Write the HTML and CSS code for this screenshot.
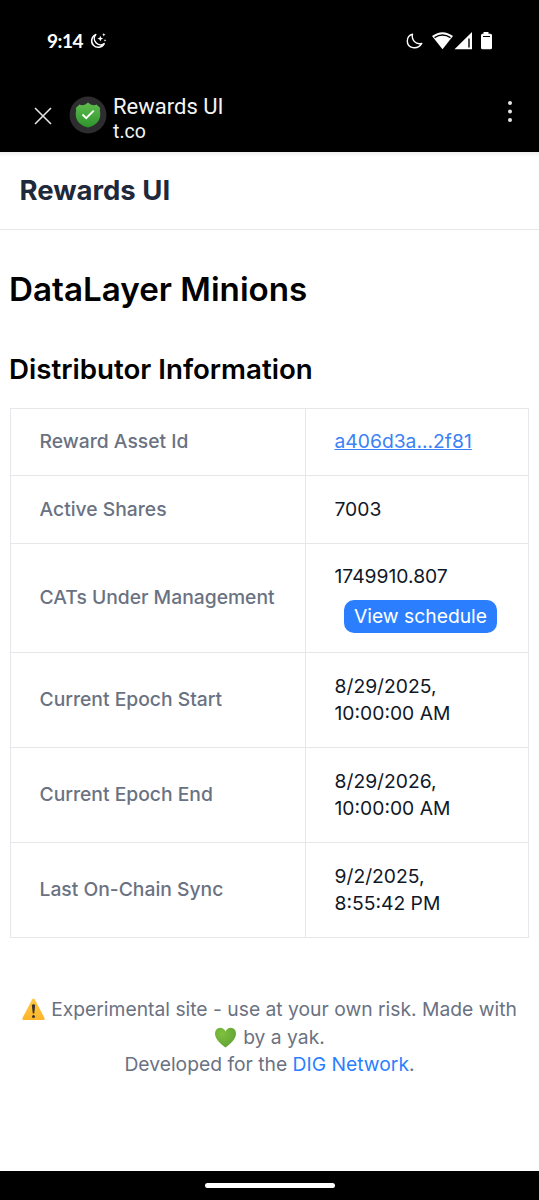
FILE: index.html
```html
<!DOCTYPE html>
<html lang="en">
<head>
<meta charset="utf-8">
<title>Rewards UI</title>
<link rel="stylesheet" href="styles.css">
</head>
<body>
<div class="status">
  <span class="clock">9:14</span>
  <svg class="bedtime" width="18" height="18" viewBox="0 0 18 18"><path d="M6.800 2.600A6.600 6.600 0 1 0 15.200 11.600A6.200 6.200 0 0 1 6.800 2.600Z" fill="none" stroke="#fff" stroke-width="1.500" stroke-linejoin="round"/><path d="M11.300 3.800l.8 2 2 .8-2 .8-.8 2-.8-2-2-.8 2-.8ZM14.800 1l.5 1.200 1.200.5-1.200.5-.5 1.200-.5-1.200-1.200-.5 1.200-.5ZM16 7l.4 1 .9.400-.9.400-.4 1-.4-1-.9-.4.900-.4Z" fill="#fff"/></svg>
  <svg class="indicators" width="88" height="20" viewBox="0 0 88 20" fill="#fff"><path d="M6.500 3.200C5.200 8.500 9.300 14 15.800 12.400C11.500 19.500 1.300 17.300 1.300 10C1.300 6.700 3.500 4.100 6.500 3.200Z" fill="none" stroke="#fff" stroke-width="1.400" stroke-linejoin="round"/><path d="M26 5.100Q36.500-2.700 47 5.100L36.500 18.200Z"/><path d="M28.500 6.600Q36.500 1.400 44.500 6.600" stroke="#000" stroke-width="1.300" fill="none"/><path d="M48.500 18.300L66 1V18.300Z"/><path d="M63 7.500V16.500" stroke="#000" stroke-width="1.400"/><path d="M77.500 1h5v1.800h2q1.500 0 1.500 1.500v12.500q0 1.500-1.500 1.500h-8q-1.500 0-1.500-1.500v-12.500q0-1.500 1.500-1.500h1Z"/><path d="M77 5.500h7" stroke="#000" stroke-width="1"/></svg>
</div>
<div class="appbar">
  <svg class="close" width="18" height="18" viewBox="0 0 18 18"><path d="M1 1L17 17M17 1L1 17" stroke="#e4e4e4" stroke-width="1.600"/></svg>
  <svg class="shield" width="38" height="38" viewBox="0 0 38 38"><defs><linearGradient id="green" x2="0" y2="1"><stop stop-color="#61bd4f"/><stop offset="1" stop-color="#2c942c"/></linearGradient></defs><circle cx="19" cy="19" r="18.500" fill="#2d2c2e"/><path d="M19 6.500Q21.500 9 24.500 9.200Q26.500 9.200 27.500 8.500L31.200 12Q30.400 14 31.200 17C32 25 26 30 19 31.500C12 30 6 25 6.800 17Q7.600 14 6.800 12L10.500 8.500Q11.500 9.200 13.500 9.200Q16.500 9 19 6.500Z" fill="url(#green)"/><path d="M13.500 18.500L17.200 22.200L24.700 14.700" fill="none" stroke="#fff" stroke-width="1.900"/></svg>
  <div class="site"><div class="site-title">Rewards UI</div><div class="site-host">t.co</div></div>
  <svg class="more" width="6" height="24" viewBox="0 0 6 24" fill="#e4e4e4"><circle cx="3" cy="3" r="2"/><circle cx="3" cy="11.500" r="2"/><circle cx="3" cy="20" r="2"/></svg>
</div>
<header class="header"><span class="brand">Rewards UI</span></header>
<main class="main">
  <h1 class="title"><span>DataLayer Minions</span></h1>
  <h2 class="subtitle"><span>Distributor Information</span></h2>
  <div class="table">
    <div class="row"><div class="label">Reward Asset Id</div><div class="value"><a class="link asset">a406d3a...2f81</a></div></div>
    <div class="row"><div class="label">Active Shares</div><div class="value">7003</div></div>
    <div class="row"><div class="label">CATs Under Management</div><div class="value"><div>1749910.807</div><button class="button">View schedule</button></div></div>
    <div class="row"><div class="label">Current Epoch Start</div><div class="value">8/29/2025,<br>10:00:00 AM</div></div>
    <div class="row"><div class="label">Current Epoch End</div><div class="value">8/29/2026,<br>10:00:00 AM</div></div>
    <div class="row"><div class="label">Last On-Chain Sync</div><div class="value">9/2/2025,<br>8:55:42 PM</div></div>
  </div>
</main>
<footer class="footer">
  <div class="line"><svg class="emoji" width="23" height="23" viewBox="0 0 23 23"><defs><linearGradient id="warn" x2="0" y2="1"><stop stop-color="#ffc943"/><stop offset="1" stop-color="#fcb52a"/></linearGradient></defs><path d="M10.300 1.200Q11.500-.3 12.700 1.200L22.500 20Q23.200 22 21.500 22H1.500Q-.2 22 .5 20Z" fill="url(#warn)"/><path d="M9.800 7Q11.500 5.500 13.200 7L12.200 15.500H10.800Z" fill="#38332f"/><circle cx="11.500" cy="18.500" r="1.500" fill="#38332f"/></svg><span>Experimental site - use at your own risk. Made with</span></div>
  <div class="line"><svg class="emoji" width="23" height="23" viewBox="0 0 23 23"><defs><radialGradient id="heart" cx=".35" cy=".3" r=".8"><stop stop-color="#7fc13e"/><stop offset="1" stop-color="#5f9f36"/></radialGradient></defs><path d="M11.500 5.500C9.500 1 4.500.8 2 4C-1 9 3 16 11.500 21.500C20 16 24 9 21 4C18.500.8 13.500 1 11.500 5.500Z" fill="url(#heart)"/></svg><span>by a yak.</span></div>
  <div class="line"><span>Developed for the <a class="link">DIG Network</a>.</span></div>
</footer>
<div class="navbar"><div class="handle"></div></div>
</body>
</html>
```

FILE: styles.css
```css
* { box-sizing: border-box; }
body { margin: 0; height: 1200px; display: flex; flex-direction: column; overflow: hidden; background: #fff; color: #101828; font: 400 19.3px/27.5px Inter, "Liberation Sans", sans-serif; }
svg { display: block; flex: none; }
.status { flex: none; height: 80px; background: #000; color: #fff; display: flex; align-items: center; padding: 1px 45px 0 47px; }
.clock { font: 700 19px/24px Lato, sans-serif; letter-spacing: -.5px; width: 41px; white-space: nowrap; }
.bedtime { margin-left: 1px; }
.indicators { margin-left: auto; }
.appbar { flex: none; height: 72px; background: #000; color: #f4f4f4; display: flex; padding: 16px 26px 0 34px; font-family: Roboto, sans-serif; }
.close { margin-top: 11px; }
.shield { margin: 0 0 0 17px; }
.site { margin-left: 6px; }
.site-title { font-size: 22px; line-height: 24px; margin-top: -1px; }
.site-host { font-size: 19.5px; line-height: 25px; }
.more { margin: 4px 0 0 auto; }
.header { flex: none; height: 78px; border-bottom: 1px solid #e5e7eb; padding: 25px 19.5px 0; background: linear-gradient(#eee, #fff 5px); }
.brand { display: block; font-size: 27.5px; font-weight: 700; color: #1e293b; }
.main { flex: none; padding: 39px 10px 0; color: #000; }
.title { margin: 0; margin-left: -1px; font-size: 33.2px; line-height: 40px; font-weight: 600; }
.subtitle { margin: 42px 0 0 -1px; font-size: 27.7px; line-height: 36px; font-weight: 600; }
.table { margin-top: 21px; border: 1px solid #e5e7eb; display: grid; grid-template-rows: 66px 68px 109px 95px 95px 95px; color: #101828; }
.row { display: grid; grid-template-columns: 295px 1fr; }
.row + .row { border-top: 1px solid #e5e7eb; }
.label { display: flex; align-items: center; padding-left: 28.5px; border-right: 1px solid #e5e7eb; color: #6a7282; font-weight: 500; white-space: nowrap; }
.value { display: flex; flex-direction: column; align-items: flex-start; justify-content: center; padding-left: 28.5px; white-space: nowrap; }
.link { color: #2b7fff; }
.asset { color: #3b82f6; text-decoration: underline; }
.button { margin: 9px 0 0 9.5px; height: 33px; width: 153px; padding: 0; border: 0; border-radius: 10px; background: #2b7fff; color: #fff; font: inherit; }
.footer { flex: none; margin-top: 58px; color: #6a7282; }
.line { display: flex; justify-content: center; height: 27.5px; gap: 6px; white-space: nowrap; }
.emoji { margin-top: 2px; }
.navbar { margin-top: auto; flex: none; height: 29px; background: #000; display: flex; justify-content: center; padding-top: 12px; }
.handle { width: 130px; height: 5px; border-radius: 3px; background: #fff; }
```
